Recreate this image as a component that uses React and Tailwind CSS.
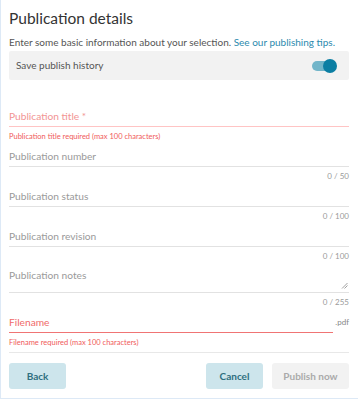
export default function App() {
  const font = { fontFamily: "Lato, 'Open Sans', sans-serif" };
  const Field = ({ label, counter, textarea }) => (
    <>
      <div className={`${textarea ? "h-[26px]" : "h-[20px]"} relative border-b border-[#e2e2e2] box-content`}>
        <div className={`text-[10.2px] ${textarea ? "leading-[18px]" : "leading-[20px]"} text-[#9a9a9a]`}>{label}</div>
        {textarea && (
          <svg className="absolute right-[1px] bottom-[3px]" width="7" height="7" viewBox="0 0 7 7">
            <path d="M1 6.5 L6.5 1 M3.5 6.5 L6.5 3.5" stroke="#888" strokeWidth="0.8" />
          </svg>
        )}
      </div>
      <div className="h-[19px] leading-[19px] text-right text-[8px] text-[#9a9a9a]">{counter}</div>
    </>
  );
  return (
    <div style={font} className="w-[358px] h-[399px] bg-white border-l border-b border-[#dde9f6] pl-[8px] pr-[9px] pt-[6px]">
      <div className="text-[15.5px] leading-[24px] text-[#333]">Publication details</div>
      <div className="mt-[4px] text-[10px] leading-[16px] text-[#555] whitespace-nowrap">
        Enter some basic information about your selection.{" "}
        <span className="text-[#2b8aae]">See our publishing tips.</span>
      </div>
      <div className="mt-[1px] h-[29px] bg-[#f2f2f2] rounded-[2px] flex items-center justify-between pl-[7px] pr-[13px]">
        <span className="text-[10px] text-[#555]">Save publish history</span>
        <div className="relative w-[24px] h-[10px] rounded-full bg-[#72b5c9]">
          <div className="absolute right-[-1px] top-[-2px] w-[14px] h-[14px] rounded-full bg-[#0b7ea3]" />
        </div>
      </div>
      <div className="mt-[26px] h-[20px] border-b border-[#ffc4c4] box-content">
        <div className="text-[10.2px] leading-[20px] text-[#f29494]">Publication title *</div>
      </div>
      <div className="h-[19px] leading-[19px] text-[7.5px] text-[#f05a5a]">Publication title required (max 100 characters)</div>
      <Field label="Publication number" counter="0 / 50" />
      <Field label="Publication status" counter="0 / 100" />
      <Field label="Publication revision" counter="0 / 100" />
      <Field label="Publication notes" counter="0 / 255" textarea />
      <div className="flex items-start">
        <div className="flex-1 h-[20px] border-b border-[#f07474] box-content">
          <div className="text-[10.2px] leading-[20px] text-[#f06a6a]">Filename</div>
        </div>
        <div className="w-[16px] text-right text-[8px] leading-[20px] text-[#888]">.pdf</div>
      </div>
      <div className="h-[20px] leading-[19px] text-[7.5px] text-[#f05a5a] border-b border-[#e8e8e8]">Filename required (max 100 characters)</div>
      <div className="mt-[10px] flex items-center">
        <button className="w-[57px] h-[26px] rounded-[3px] bg-[#cde5ec] text-[10px] font-bold text-[#2f6f80]">Back</button>
        <div className="flex-1" />
        <button className="w-[57px] h-[26px] rounded-[3px] bg-[#cde5ec] text-[10px] font-bold text-[#2f6f80]">Cancel</button>
        <button className="ml-[9px] w-[77px] h-[26px] rounded-[3px] bg-[#f2f2f2] text-[10px] font-bold text-[#aaaaaa]">Publish now</button>
      </div>
    </div>
  );
}
